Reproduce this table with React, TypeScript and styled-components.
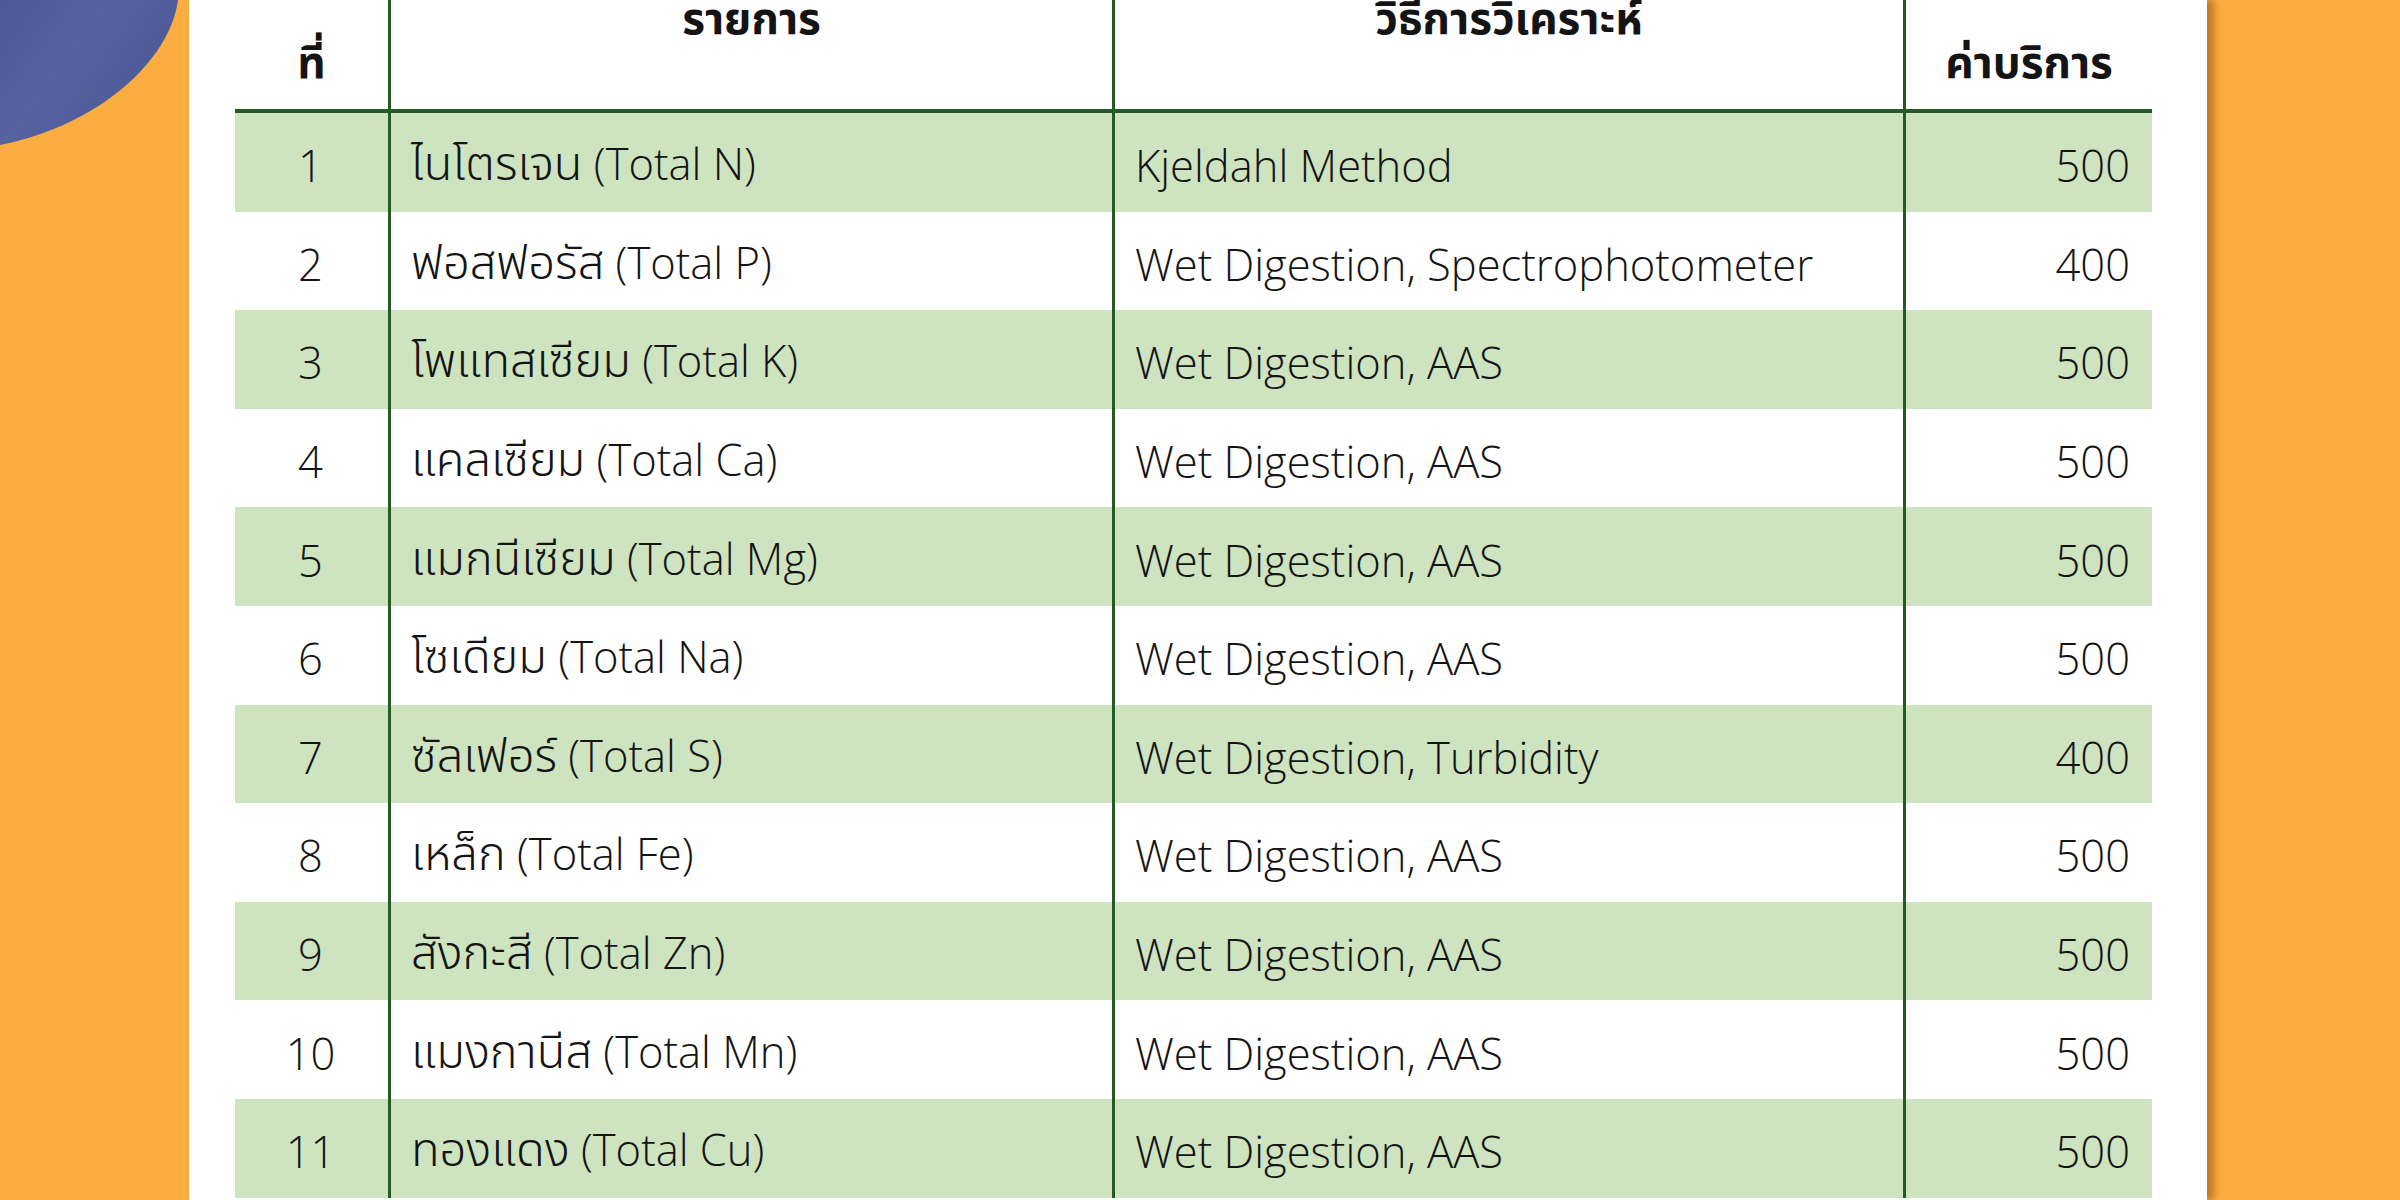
import styled, { createGlobalStyle } from "styled-components";

const GlobalStyle = createGlobalStyle`
  html, body {
    margin: 0;
    padding: 0;
  }
  body {
    font-family: "Open Sans", "Noto Sans Thai", "Noto Sans", sans-serif;
    color: #141414;
  }
`;

const COLUMNS = "153px 724px 791px 249px";
const LINE = "#245a24";

const Page = styled.div`
  position: relative;
  width: 2400px;
  height: 1200px;
  overflow: hidden;
  background: #fbad41;
  display: flex;
  padding-left: 189px;
  box-sizing: border-box;
`;

const Blob = styled.svg`
  position: absolute;
  left: 0;
  top: 0;
`;

const Card = styled.div`
  width: 2018px;
  height: 100%;
  background: #fff;
  box-shadow: 7px 0 7px rgba(150, 90, 20, 0.6);
  padding-left: 46px;
  box-sizing: border-box;
`;

const Table = styled.div`
  width: 1917px;
  display: flex;
  flex-direction: column;
`;

const HeadRow = styled.div`
  display: grid;
  grid-template-columns: ${COLUMNS};
  height: 113px;
  border-bottom: 4px solid ${LINE};
  box-sizing: border-box;
`;

const HeadCell = styled.div<{ $valign: "top" | "bottom"; $first?: boolean }>`
  display: flex;
  justify-content: center;
  align-items: ${(p) => (p.$valign === "top" ? "flex-start" : "flex-end")};
  border-left: ${(p) => (p.$first ? "none" : `3px solid ${LINE}`)};
  font-size: 44px;
  font-weight: 700;
  line-height: 1;
  padding-bottom: ${(p) => (p.$valign === "bottom" ? "26px" : "0")};

  & > span {
    margin-top: ${(p) => (p.$valign === "top" ? "-5px" : "0")};
  }
`;

const Row = styled.div<{ $shaded: boolean }>`
  display: grid;
  grid-template-columns: ${COLUMNS};
  height: 98.6px;
  background: ${(p) => (p.$shaded ? "#cee3bf" : "#fff")};
`;

const Cell = styled.div<{ $align: "left" | "center" | "right"; $first?: boolean }>`
  display: flex;
  align-items: center;
  justify-content: ${(p) =>
    p.$align === "left" ? "flex-start" : p.$align === "right" ? "flex-end" : "center"};
  border-left: ${(p) => (p.$first ? "none" : `3px solid ${LINE}`)};
  padding: 7px 22px 0 20px;
  font-size: 43.5px;
  font-weight: 300;
  white-space: nowrap;
`;

const ThaiName = styled.span`
  font-size: 47px;
`;

interface Item {
  no: number;
  thai: string;
  symbol: string;
  method: string;
  price: number;
}

const items: Item[] = [
  { no: 1, thai: "ไนโตรเจน", symbol: "Total N", method: "Kjeldahl Method", price: 500 },
  { no: 2, thai: "ฟอสฟอรัส", symbol: "Total P", method: "Wet Digestion, Spectrophotometer", price: 400 },
  { no: 3, thai: "โพแทสเซียม", symbol: "Total K", method: "Wet Digestion, AAS", price: 500 },
  { no: 4, thai: "แคลเซียม", symbol: "Total Ca", method: "Wet Digestion, AAS", price: 500 },
  { no: 5, thai: "แมกนีเซียม", symbol: "Total Mg", method: "Wet Digestion, AAS", price: 500 },
  { no: 6, thai: "โซเดียม", symbol: "Total Na", method: "Wet Digestion, AAS", price: 500 },
  { no: 7, thai: "ซัลเฟอร์", symbol: "Total S", method: "Wet Digestion, Turbidity", price: 400 },
  { no: 8, thai: "เหล็ก", symbol: "Total Fe", method: "Wet Digestion, AAS", price: 500 },
  { no: 9, thai: "สังกะสี", symbol: "Total Zn", method: "Wet Digestion, AAS", price: 500 },
  { no: 10, thai: "แมงกานีส", symbol: "Total Mn", method: "Wet Digestion, AAS", price: 500 },
  { no: 11, thai: "ทองแดง", symbol: "Total Cu", method: "Wet Digestion, AAS", price: 500 },
];

const App = () => (
  <Page>
    <GlobalStyle />
    <Blob width="260" height="160" viewBox="0 0 260 160">
      <defs>
        <linearGradient id="blobShade" x1="0" y1="0" x2="1" y2="0.6">
          <stop offset="0" stopColor="#4c5898" />
          <stop offset="0.45" stopColor="#56639f" />
          <stop offset="1" stopColor="#4b5797" />
        </linearGradient>
      </defs>
      <path d="M0 0 H178 C170 60 100 125 0 145 Z" fill="url(#blobShade)" />
    </Blob>
    <Card>
      <Table>
        <HeadRow>
          <HeadCell $valign="bottom" $first>
            <span>ที่</span>
          </HeadCell>
          <HeadCell $valign="top">
            <span>รายการ</span>
          </HeadCell>
          <HeadCell $valign="top">
            <span>วิธีการวิเคราะห์</span>
          </HeadCell>
          <HeadCell $valign="bottom">
            <span>ค่าบริการ</span>
          </HeadCell>
        </HeadRow>
        {items.map((item, i) => (
          <Row key={item.no} $shaded={i % 2 === 0}>
            <Cell $align="center" $first>
              {item.no}
            </Cell>
            <Cell $align="left">
              <span>
                <ThaiName>{item.thai}</ThaiName> ({item.symbol})
              </span>
            </Cell>
            <Cell $align="left">{item.method}</Cell>
            <Cell $align="right">{item.price}</Cell>
          </Row>
        ))}
      </Table>
    </Card>
  </Page>
);

export default App;
